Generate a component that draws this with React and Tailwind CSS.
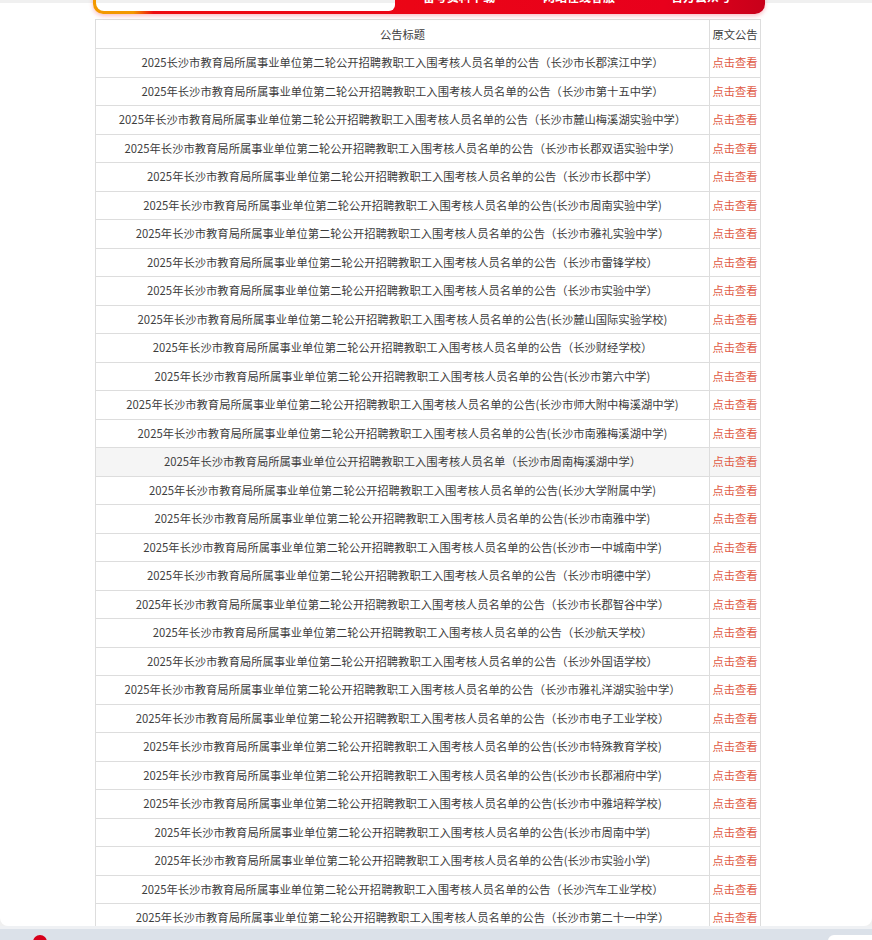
const PREFIX = '2025年长沙市教育局所属事业单位第二轮公开招聘教职工入围考核人员名单的公告';

const ROWS = [
  '2025长沙市教育局所属事业单位第二轮公开招聘教职工入围考核人员名单的公告（长沙市长郡滨江中学）',
  PREFIX + '（长沙市第十五中学）',
  PREFIX + '（长沙市麓山梅溪湖实验中学）',
  PREFIX + '（长沙市长郡双语实验中学）',
  PREFIX + '（长沙市长郡中学）',
  PREFIX + '(长沙市周南实验中学)',
  PREFIX + '（长沙市雅礼实验中学）',
  PREFIX + '（长沙市雷锋学校）',
  PREFIX + '（长沙市实验中学）',
  PREFIX + '(长沙麓山国际实验学校)',
  PREFIX + '（长沙财经学校）',
  PREFIX + '(长沙市第六中学)',
  PREFIX + '(长沙市师大附中梅溪湖中学)',
  PREFIX + '(长沙市南雅梅溪湖中学)',
  '2025年长沙市教育局所属事业单位公开招聘教职工入围考核人员名单（长沙市周南梅溪湖中学）',
  PREFIX + '(长沙大学附属中学)',
  PREFIX + '(长沙市南雅中学)',
  PREFIX + '(长沙市一中城南中学)',
  PREFIX + '（长沙市明德中学）',
  PREFIX + '（长沙市长郡智谷中学）',
  PREFIX + '（长沙航天学校）',
  PREFIX + '（长沙外国语学校）',
  PREFIX + '（长沙市雅礼洋湖实验中学）',
  PREFIX + '（长沙市电子工业学校）',
  PREFIX + '(长沙市特殊教育学校)',
  PREFIX + '(长沙市长郡湘府中学)',
  PREFIX + '(长沙市中雅培粹学校)',
  PREFIX + '(长沙市周南中学)',
  PREFIX + '(长沙市实验小学)',
  PREFIX + '（长沙汽车工业学校）',
  PREFIX + '（长沙市第二十一中学）',
];

const FONT = "font-['Microsoft_YaHei','Noto_Sans_CJK_SC',sans-serif]";

function Banner() {
  return (
    <div className="relative z-10 ml-[93px] w-[672px] h-[14px] flex flex-col">
      <div className="-mt-[26px] h-[40px] shrink-0 flex items-end rounded-b-[10px] bg-[linear-gradient(90deg,#f39800_0%,#f39800_6%,#ee0a10_9%,#e8001c_85%,#c8001a_100%)] shadow-[0_2px_4px_rgba(230,0,30,0.25)]">
        <div className="ml-[3px] mb-[3px] w-[299px] h-[34px] bg-white rounded-bl-[8px] rounded-br-[6px] border-t-[26px] border-[#f0f0f0]" />
        <div className={`flex items-end pb-[11px] text-[12px] leading-none font-bold text-white whitespace-nowrap ${FONT}`}>
          <span className="ml-[28px]">备考资料下载</span>
          <span className="ml-[48px]">网站在线客服</span>
          <span className="ml-[56px]">官方公众号</span>
        </div>
      </div>
    </div>
  );
}

export default function App() {
  return (
    <div className={`min-h-[940px] bg-[#eff1f4] flex flex-col ${FONT}`}>
      <Banner />
      <div className="-mt-[14px] bg-[#f0f0f0] pt-[3px]">
        <div className="h-[923px] bg-white rounded-b-[8px] overflow-hidden pt-[16px]">
          <table className="ml-[95px] w-[666px] border-collapse text-[11.3px] text-[#3c3c3c]">
            <thead>
              <tr className="h-[29px]">
                <th className="border border-[#dddddd] font-normal">公告标题</th>
                <th className="w-[51px] border border-[#dddddd] font-normal px-0 whitespace-nowrap">原文公告</th>
              </tr>
            </thead>
            <tbody>
              {ROWS.map((title, i) => (
                <tr key={i} className={i === 14 ? 'h-[28.5px] bg-[#f5f5f5]' : 'h-[28.5px]'}>
                  <td className="border border-[#dddddd] text-center whitespace-nowrap">{title}</td>
                  <td className="border border-[#dddddd] text-center whitespace-nowrap px-0">
                    <a className="text-[#e05a44] cursor-pointer">点击查看</a>
                  </td>
                </tr>
              ))}
            </tbody>
          </table>
        </div>
      </div>
      <div className="mt-[3px] h-[11px] bg-[#dbe1e9] flex items-start overflow-hidden pt-[6px] pl-[33px] pr-0">
        <div className="w-[14px] h-[14px] rounded-full bg-[#d7001b]" />
        <div className="ml-auto w-[44px] h-[20px] rounded-tl-[6px] bg-white" />
      </div>
    </div>
  );
}
